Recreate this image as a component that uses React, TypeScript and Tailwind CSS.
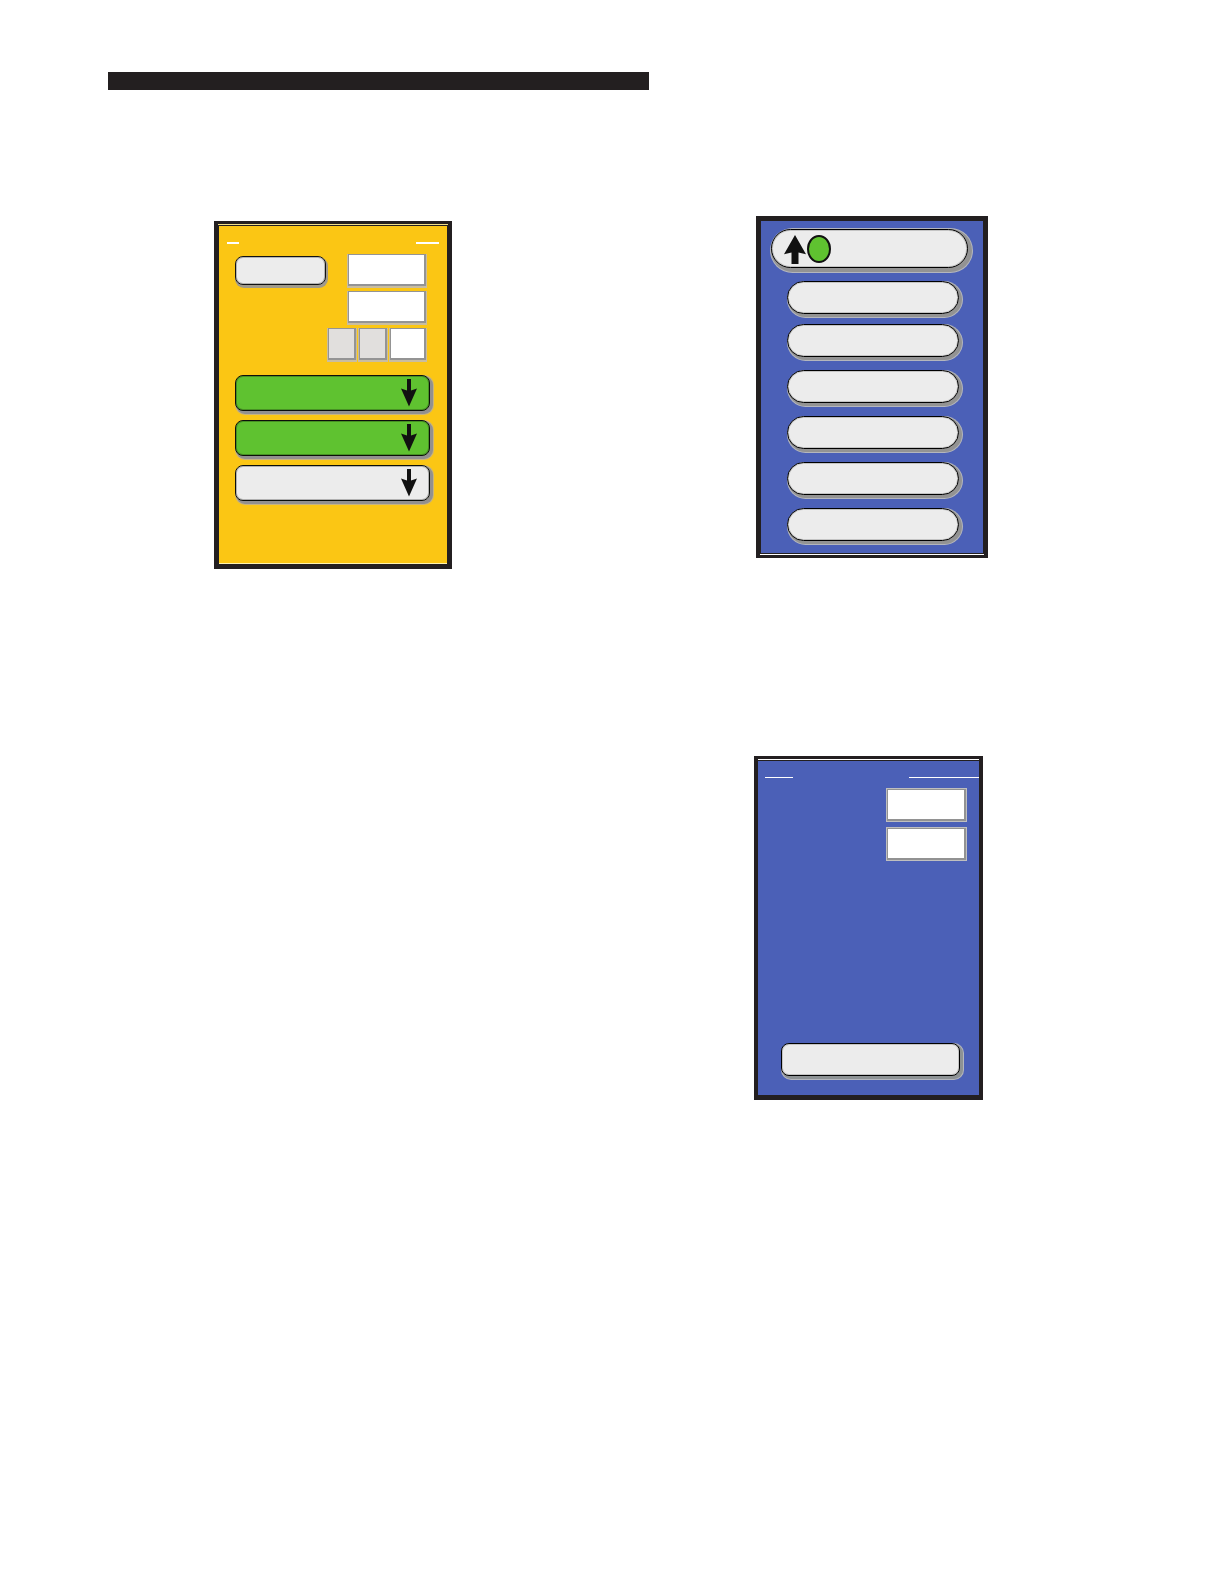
import { ReactNode } from 'react'
import clsx from 'clsx'

const menuRows = ['Row 3', 'Row 4', 'Row 5', 'Row 6']

function DownArrow() {
  return (
    <svg width="16" height="28" viewBox="0 0 16 28" fill="#111111" aria-hidden="true">
      <path d="M6 0H10V11.6L16 9.6L8 27.6L0 9.6L6 11.6Z" />
    </svg>
  )
}

function UpArrow() {
  return (
    <svg width="22" height="29" viewBox="0 0 22 29" fill="#111111" aria-hidden="true">
      <path d="M11 0L22 19.2L14.5 17.6V29H7.5V17.6L0 19.2Z" />
    </svg>
  )
}

interface ChildrenProps {
  children?: ReactNode
}

// green and grey action bars of the setup panel
function ActionButton({ label, active }: { label: string; active?: boolean }) {
  return (
    <button
      type="button"
      aria-label={label}
      className={clsx(
        'flex h-9 w-[195px] items-start justify-end rounded-lg border border-[#0c0f0a] pt-[3px] pr-3 shadow-[inset_0_0_0_1px_#00000040,2px_2px_0_1px_#92908f,2px_2px_0_2px_#c9b47c]',
        active ? 'bg-[#5fc230]' : 'bg-[#ececec]'
      )}
    >
      <DownArrow />
    </button>
  )
}

function PillButton({ label }: { label: string }) {
  return (
    <button
      type="button"
      aria-label={label}
      className="block h-[33px] w-[172px] rounded-full border border-black bg-[#ececec] shadow-[inset_0_0_0_1px_#c4c4c4,2px_2px_0_1px_#939393,2px_2px_0_2px_#b4b6bc]"
    />
  )
}

function SetupField({ label, className }: { label: string; className: string }) {
  return (
    <input
      type="text"
      aria-label={label}
      className={clsx(
        'border border-r-2 border-b-2 border-[#949494] px-1 text-sm shadow-[0_1px_0_1px_#c9bda0]',
        className
      )}
    />
  )
}

function DetailField({ label }: { label: string }) {
  return (
    <input
      type="text"
      aria-label={label}
      className="h-8 w-[79px] border-t border-r-2 border-b-2 border-l border-[#929292] bg-white px-1 text-sm shadow-[0_0_0_1px_#bfbfbf]"
    />
  )
}

function SetupPanel() {
  return (
    <section className="w-[238px] bg-[#231f20] px-[5px] pt-[3px] pb-[5px]">
      <div className="-mx-px mb-px h-px bg-[#f3e08a]" />
      <div className="border-b border-[#fff3b0] bg-[#fbc614] pt-4 pb-[62px]">
        <div className="flex justify-between px-2">
          <span className="h-0.5 w-3 bg-white" />
          <span className="h-0.5 w-[23px] bg-white" />
        </div>
        <div className="mt-2.5 flex flex-col gap-[5px] pr-[21px] pl-4">
          <div className="flex items-center justify-between">
            <button
              type="button"
              aria-label="Mode"
              className="h-[29px] w-[91px] rounded-lg border border-[#111111] bg-[#ececec] shadow-[inset_0_0_0_1px_#b4b4b4,1px_2px_0_1px_#a09a8c]"
            />
            <SetupField label="First value" className="h-8 w-[78px] bg-white" />
          </div>
          <div className="flex justify-end">
            <SetupField label="Second value" className="h-8 w-[78px] bg-white" />
          </div>
          <div className="flex justify-end gap-[3px]">
            <SetupField label="Option one" className="h-8 w-7 bg-[#e1dfdd]" />
            <SetupField label="Option two" className="h-8 w-7 bg-[#e1dfdd]" />
            <SetupField label="Third value" className="h-8 w-9 bg-white" />
          </div>
        </div>
        <div className="mt-[15px] flex flex-col gap-[9px] pl-4">
          <ActionButton label="Action one" active />
          <ActionButton label="Action two" active />
          <ActionButton label="Action three" />
        </div>
      </div>
    </section>
  )
}

function MenuPanel() {
  return (
    <section className="w-[232px] self-center bg-[#231f20] px-[5px] pt-[5px] pb-[3px]">
      <div className="bg-[#4b60b7] pt-2 pb-3">
        <button
          type="button"
          aria-label="Back"
          className="ml-[10px] flex h-[39px] w-[197px] items-center gap-px rounded-full border border-black bg-[#ececec] pt-px pl-3 shadow-[inset_0_0_0_1px_#c4c4c4,2px_2px_0_2px_#939393,2px_2px_0_3px_#b4b6bc]"
        >
          <UpArrow />
          <span className="h-7 w-6 rounded-[50%] border-2 border-[#111111] bg-[#5fc230]" />
        </button>
        <div className="mt-[13px] flex flex-col gap-[13px] pl-[26px]">
          <div className="flex flex-col gap-[10px]">
            <PillButton label="Row 1" />
            <PillButton label="Row 2" />
          </div>
          {menuRows.map(row => (
            <PillButton key={row} label={row} />
          ))}
        </div>
      </div>
      <div className="-mx-px mt-px h-px bg-white" />
    </section>
  )
}

function DetailPanel() {
  return (
    <section className="w-[229px] self-start bg-[#231f20] px-1 pt-[3px] pb-[5px]">
      <div className="mb-px h-px bg-white" />
      <div className="bg-[#4b60b7] pt-4 pb-[19px]">
        <div className="flex justify-between pl-[7px]">
          <span className="h-px w-7 bg-white" />
          <span className="h-px w-[70px] bg-white" />
        </div>
        <div className="mt-[11px] flex flex-col items-end gap-[7px] pr-[13px]">
          <DetailField label="First reading" />
          <DetailField label="Second reading" />
        </div>
        <button
          type="button"
          aria-label="Confirm"
          className="mt-[183px] ml-[23px] block h-[33px] w-[179px] rounded-lg border border-black bg-[#ececec] shadow-[inset_0_0_0_1px_#c4c4c4,2px_2px_0_1px_#8d9294,2px_2px_0_2px_#b4b6bc]"
        />
      </div>
    </section>
  )
}

function Page({ children }: ChildrenProps) {
  return (
    <main className="min-h-screen bg-white px-[108px] pt-[72px] font-['Liberation_Sans',sans-serif]">
      {children}
    </main>
  )
}

export default function App() {
  return (
    <Page>
      <div className="h-[18px] w-[541px] max-w-full bg-[#231f20]" />
      <div className="mt-[126px] grid grid-cols-[450fr_488fr] items-start gap-[70px]">
        <div className="flex justify-center pt-[5px]">
          <SetupPanel />
        </div>
        <div className="mx-auto flex w-[236px] flex-col gap-[198px]">
          <MenuPanel />
          <DetailPanel />
        </div>
      </div>
    </Page>
  )
}
